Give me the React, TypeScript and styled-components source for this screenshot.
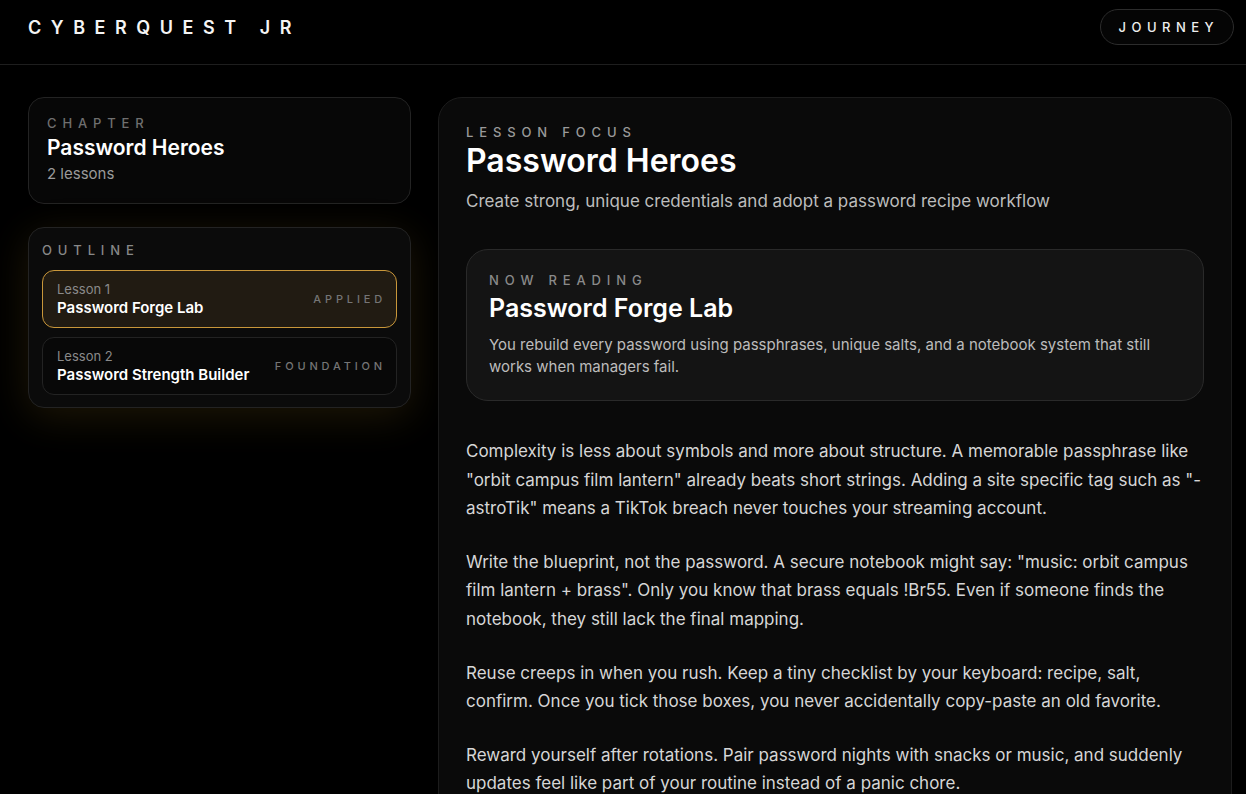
import styled, { createGlobalStyle } from "styled-components";

const GlobalStyle = createGlobalStyle`
  html, body {
    margin: 0;
    padding: 0;
    background: #000;
    color: #f2f2f2;
    font-family: Inter, "Noto Sans", sans-serif;
  }
  * { box-sizing: border-box; }
`;

const Page = styled.div`
  min-height: 100vh;
  background: #000;
`;

const TopBar = styled.header`
  height: 65px;
  display: flex;
  align-items: center;
  justify-content: space-between;
  padding: 0 12px 0 28px;
  border-bottom: 1px solid #1e1e1e;
`;

const Logo = styled.div`
  font-size: 18px;
  font-weight: 600;
  letter-spacing: 0.53em;
  color: #f4f4f4;
  margin-top: -10px;
`;

const PillButton = styled.button`
  height: 36px;
  padding: 0 14px 0 18px;
  margin-top: -10px;
  border-radius: 18px;
  border: 1px solid #2c2c2c;
  background: #050505;
  color: #eee;
  font-family: inherit;
  font-size: 13px;
  font-weight: 500;
  letter-spacing: 0.42em;
`;

const Layout = styled.main`
  display: grid;
  grid-template-columns: 383px 794px;
  gap: 27px;
  padding: 32px 14px 0 28px;
`;

const Sidebar = styled.aside`
  display: flex;
  flex-direction: column;
  gap: 23px;
`;

const Card = styled.section<{ $glow?: boolean }>`
  border: 1px solid #232323;
  border-radius: 16px;
  background: ${(p) => (p.$glow ? "#0b0b0b" : "#070707")};
  box-shadow: ${(p) =>
    p.$glow ? "0 8px 40px rgba(214, 160, 40, 0.14)" : "none"};
`;

const ChapterCard = styled(Card)`
  padding: 17px 18px 20px;
`;

const OutlineCard = styled(Card)`
  padding: 14px 13px 12px;
`;

const Eyebrow = styled.div<{ $tone?: string }>`
  font-size: 13px;
  font-weight: 500;
  letter-spacing: 0.45em;
  text-transform: uppercase;
  color: ${(p) => p.$tone ?? "#7a7a7a"};
`;

const ChapterTitle = styled.h2`
  margin: 4px 0 4px;
  font-size: 21px;
  font-weight: 600;
  color: #fff;
`;

const Muted = styled.div`
  font-size: 15px;
  color: #9a9a9a;
`;

const LessonList = styled.div`
  display: flex;
  flex-direction: column;
  gap: 9px;
  margin-top: 12px;
`;

const LessonItem = styled.div<{ $active?: boolean }>`
  height: 58px;
  display: flex;
  align-items: center;
  justify-content: space-between;
  padding: 0 14px;
  border-radius: 12px;
  border: 1px solid ${(p) => (p.$active ? "#c9973a" : "#232323")};
  background: ${(p) => (p.$active ? "#211b12" : "#080808")};
`;

const LessonText = styled.div`
  display: flex;
  flex-direction: column;
  gap: 1px;
`;

const LessonNumber = styled.span`
  font-size: 13px;
  color: #8a8a8a;
`;

const LessonName = styled.span`
  font-size: 15px;
  font-weight: 600;
  color: #fff;
`;

const Tag = styled.span`
  font-size: 11px;
  font-weight: 500;
  letter-spacing: 0.35em;
  color: #757575;
  margin-right: -4px;
`;

const Panel = styled.section`
  border: 1px solid #1c1c1c;
  border-radius: 24px;
  background: #0a0a0a;
  padding: 26px 27px 40px;
  min-height: 720px;
`;

const Title = styled.h1`
  margin: 1px 0 11px;
  font-size: 32px;
  font-weight: 600;
  color: #fff;
`;

const Subtitle = styled.p`
  margin: 0 0 38px;
  font-size: 17px;
  color: #bdbdbd;
`;

const ReadingCard = styled.div`
  border: 1px solid #2a2a2a;
  border-radius: 22px;
  background: #141414;
  padding: 22px 22px 22px;
  margin-bottom: 36px;
`;

const ReadingTitle = styled.h3`
  margin: 5px 0 11px;
  font-size: 25px;
  font-weight: 600;
  color: #fff;
`;

const ReadingText = styled.p`
  margin: 0;
  font-size: 15px;
  line-height: 22px;
  color: #bcbcbc;
`;

const Body = styled.div`
  display: flex;
  flex-direction: column;
  gap: 25px;
`;

const Paragraph = styled.p`
  margin: 0;
  font-size: 17px;
  line-height: 28.6px;
  color: #d6d6d6;
`;

const lessons = [
  { num: "Lesson 1", name: "Password Forge Lab", tag: "Applied", active: true },
  { num: "Lesson 2", name: "Password Strength Builder", tag: "Foundation", active: false },
];

const paragraphs = [
  'Complexity is less about symbols and more about structure. A memorable passphrase like "orbit campus film lantern" already beats short strings. Adding a site specific tag such as "-astroTik" means a TikTok breach never touches your streaming account.',
  'Write the blueprint, not the password. A secure notebook might say: "music: orbit campus film lantern + brass". Only you know that brass equals !Br55. Even if someone finds the notebook, they still lack the final mapping.',
  "Reuse creeps in when you rush. Keep a tiny checklist by your keyboard: recipe, salt, confirm. Once you tick those boxes, you never accidentally copy-paste an old favorite.",
  "Reward yourself after rotations. Pair password nights with snacks or music, and suddenly updates feel like part of your routine instead of a panic chore.",
];

export default function App() {
  return (
    <Page>
      <GlobalStyle />
      <TopBar>
        <Logo>CYBERQUEST JR</Logo>
        <PillButton>JOURNEY</PillButton>
      </TopBar>
      <Layout>
        <Sidebar>
          <ChapterCard>
            <Eyebrow $tone="#6f6f6f">Chapter</Eyebrow>
            <ChapterTitle>Password Heroes</ChapterTitle>
            <Muted>2 lessons</Muted>
          </ChapterCard>
          <OutlineCard $glow>
            <Eyebrow $tone="#888">Outline</Eyebrow>
            <LessonList>
              {lessons.map((l) => (
                <LessonItem key={l.num} $active={l.active}>
                  <LessonText>
                    <LessonNumber>{l.num}</LessonNumber>
                    <LessonName>{l.name}</LessonName>
                  </LessonText>
                  <Tag>{l.tag.toUpperCase()}</Tag>
                </LessonItem>
              ))}
            </LessonList>
          </OutlineCard>
        </Sidebar>
        <Panel>
          <Eyebrow $tone="#9a9a9a">Lesson focus</Eyebrow>
          <Title>Password Heroes</Title>
          <Subtitle>
            Create strong, unique credentials and adopt a password recipe workflow
          </Subtitle>
          <ReadingCard>
            <Eyebrow $tone="#8a8a8a">Now reading</Eyebrow>
            <ReadingTitle>Password Forge Lab</ReadingTitle>
            <ReadingText>
              You rebuild every password using passphrases, unique salts, and a
              notebook system that still works when managers fail.
            </ReadingText>
          </ReadingCard>
          <Body>
            {paragraphs.map((p, i) => (
              <Paragraph key={i}>{p}</Paragraph>
            ))}
          </Body>
        </Panel>
      </Layout>
    </Page>
  );
}
